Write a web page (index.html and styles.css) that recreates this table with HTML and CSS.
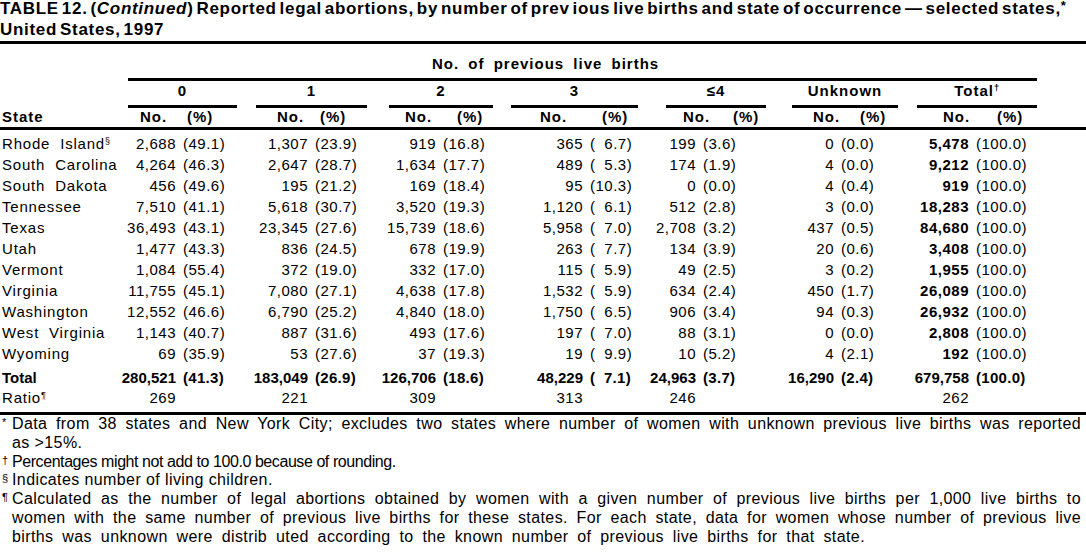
FILE: index.html
```html
<!DOCTYPE html>
<html>
<head>
<meta charset="utf-8">
<link rel="stylesheet" href="styles.css">
</head>
<body>
<h1 class="title"><span class="t1">TABLE 12. (<i>Continued</i>) Reported legal abortions, by number of prev ious live births and state of occurrence — selected states,<sup>*</sup></span><span class="t2">United States, 1997</span></h1>
<table class="data">
<colgroup>
<col class="c-state"><col class="c-n0"><col class="c-p0"><col class="c-n1"><col class="c-p1"><col class="c-n2"><col class="c-p2"><col class="c-n3"><col class="c-p3"><col class="c-n4"><col class="c-p4"><col class="c-n5"><col class="c-p5"><col class="c-n6"><col class="c-p6"><col class="c-rest">
</colgroup>
<thead>
<tr class="h-top"><th></th><th colspan="14"><div class="toprule">No. of previous live births</div></th><th></th></tr>
<tr class="h-grp">
<th></th>
<th colspan="2"><div class="grule g0">0</div></th>
<th colspan="2"><div class="grule g1">1</div></th>
<th colspan="2"><div class="grule g2">2</div></th>
<th colspan="2"><div class="grule g3">3</div></th>
<th colspan="2"><div class="grule g4">≤4</div></th>
<th colspan="2"><div class="grule g5">Unknown</div></th>
<th colspan="2"><div class="grule g6">Total<sup>†</sup></div></th>
<th></th>
</tr>
<tr class="h-sub">
<th class="st">State</th>
<th class="hn n0">No.</th><th class="hp p0">(%)</th>
<th class="hn n1">No.</th><th class="hp p1">(%)</th>
<th class="hn n2">No.</th><th class="hp p2">(%)</th>
<th class="hn n3">No.</th><th class="hp p3">(%)</th>
<th class="hn n4">No.</th><th class="hp p4">(%)</th>
<th class="hn n5">No.</th><th class="hp p5">(%)</th>
<th class="hn n6">No.</th><th class="hp p6">(%)</th>
<th></th>
</tr>
</thead>
<tbody>
<tr class="first"><td class="st">Rhode Island<sup>§</sup></td><td class="n">2,688</td><td class="p">(49.1)</td><td class="n">1,307</td><td class="p">(23.9)</td><td class="n">919</td><td class="p">(16.8)</td><td class="n">365</td><td class="p">(&#8199;6.7)</td><td class="n">199</td><td class="p">(3.6)</td><td class="n">0</td><td class="p">(0.0)</td><td class="n b">5,478</td><td class="p">(100.0)</td><td></td></tr>
<tr><td class="st">South Carolina</td><td class="n">4,264</td><td class="p">(46.3)</td><td class="n">2,647</td><td class="p">(28.7)</td><td class="n">1,634</td><td class="p">(17.7)</td><td class="n">489</td><td class="p">(&#8199;5.3)</td><td class="n">174</td><td class="p">(1.9)</td><td class="n">4</td><td class="p">(0.0)</td><td class="n b">9,212</td><td class="p">(100.0)</td><td></td></tr>
<tr><td class="st">South Dakota</td><td class="n">456</td><td class="p">(49.6)</td><td class="n">195</td><td class="p">(21.2)</td><td class="n">169</td><td class="p">(18.4)</td><td class="n">95</td><td class="p">(10.3)</td><td class="n">0</td><td class="p">(0.0)</td><td class="n">4</td><td class="p">(0.4)</td><td class="n b">919</td><td class="p">(100.0)</td><td></td></tr>
<tr><td class="st">Tennessee</td><td class="n">7,510</td><td class="p">(41.1)</td><td class="n">5,618</td><td class="p">(30.7)</td><td class="n">3,520</td><td class="p">(19.3)</td><td class="n">1,120</td><td class="p">(&#8199;6.1)</td><td class="n">512</td><td class="p">(2.8)</td><td class="n">3</td><td class="p">(0.0)</td><td class="n b">18,283</td><td class="p">(100.0)</td><td></td></tr>
<tr><td class="st">Texas</td><td class="n">36,493</td><td class="p">(43.1)</td><td class="n">23,345</td><td class="p">(27.6)</td><td class="n">15,739</td><td class="p">(18.6)</td><td class="n">5,958</td><td class="p">(&#8199;7.0)</td><td class="n">2,708</td><td class="p">(3.2)</td><td class="n">437</td><td class="p">(0.5)</td><td class="n b">84,680</td><td class="p">(100.0)</td><td></td></tr>
<tr><td class="st">Utah</td><td class="n">1,477</td><td class="p">(43.3)</td><td class="n">836</td><td class="p">(24.5)</td><td class="n">678</td><td class="p">(19.9)</td><td class="n">263</td><td class="p">(&#8199;7.7)</td><td class="n">134</td><td class="p">(3.9)</td><td class="n">20</td><td class="p">(0.6)</td><td class="n b">3,408</td><td class="p">(100.0)</td><td></td></tr>
<tr><td class="st">Vermont</td><td class="n">1,084</td><td class="p">(55.4)</td><td class="n">372</td><td class="p">(19.0)</td><td class="n">332</td><td class="p">(17.0)</td><td class="n">115</td><td class="p">(&#8199;5.9)</td><td class="n">49</td><td class="p">(2.5)</td><td class="n">3</td><td class="p">(0.2)</td><td class="n b">1,955</td><td class="p">(100.0)</td><td></td></tr>
<tr><td class="st">Virginia</td><td class="n">11,755</td><td class="p">(45.1)</td><td class="n">7,080</td><td class="p">(27.1)</td><td class="n">4,638</td><td class="p">(17.8)</td><td class="n">1,532</td><td class="p">(&#8199;5.9)</td><td class="n">634</td><td class="p">(2.4)</td><td class="n">450</td><td class="p">(1.7)</td><td class="n b">26,089</td><td class="p">(100.0)</td><td></td></tr>
<tr><td class="st">Washington</td><td class="n">12,552</td><td class="p">(46.6)</td><td class="n">6,790</td><td class="p">(25.2)</td><td class="n">4,840</td><td class="p">(18.0)</td><td class="n">1,750</td><td class="p">(&#8199;6.5)</td><td class="n">906</td><td class="p">(3.4)</td><td class="n">94</td><td class="p">(0.3)</td><td class="n b">26,932</td><td class="p">(100.0)</td><td></td></tr>
<tr><td class="st">West Virginia</td><td class="n">1,143</td><td class="p">(40.7)</td><td class="n">887</td><td class="p">(31.6)</td><td class="n">493</td><td class="p">(17.6)</td><td class="n">197</td><td class="p">(&#8199;7.0)</td><td class="n">88</td><td class="p">(3.1)</td><td class="n">0</td><td class="p">(0.0)</td><td class="n b">2,808</td><td class="p">(100.0)</td><td></td></tr>
<tr><td class="st">Wyoming</td><td class="n">69</td><td class="p">(35.9)</td><td class="n">53</td><td class="p">(27.6)</td><td class="n">37</td><td class="p">(19.3)</td><td class="n">19</td><td class="p">(&#8199;9.9)</td><td class="n">10</td><td class="p">(5.2)</td><td class="n">4</td><td class="p">(2.1)</td><td class="n b">192</td><td class="p">(100.0)</td><td></td></tr>
<tr class="total"><td class="st">Total</td><td class="n">280,521</td><td class="p">(41.3)</td><td class="n">183,049</td><td class="p">(26.9)</td><td class="n">126,706</td><td class="p">(18.6)</td><td class="n">48,229</td><td class="p">(&#8199;7.1)</td><td class="n">24,963</td><td class="p">(3.7)</td><td class="n">16,290</td><td class="p">(2.4)</td><td class="n">679,758</td><td class="p">(100.0)</td><td></td></tr>
<tr class="ratio"><td class="st">Ratio<sup>¶</sup></td><td class="n">269</td><td class="p"></td><td class="n">221</td><td class="p"></td><td class="n">309</td><td class="p"></td><td class="n">313</td><td class="p"></td><td class="n">246</td><td class="p"></td><td class="n"></td><td class="p"></td><td class="n">262</td><td class="p"></td><td></td></tr>
</tbody>
</table>
<div class="notes">
<p class="note"><span class="jl"><span class="mk">*</span>Data from 38 states and New York City; excludes two states where number of women with unknown previous live births was reported</span><span class="ll">as &gt;15%.</span></p>
<p class="note"><span class="ll tight"><span class="mk">†</span>Percentages might not add to 100.0 because of rounding.</span></p>
<p class="note"><span class="ll"><span class="mk">§</span>Indicates number of living children.</span></p>
<p class="note"><span class="jl"><span class="mk">¶</span>Calculated as the number of legal abortions obtained by women with a given number of previous live births per 1,000 live births to</span><span class="jl">women with the same number of previous live births for these states. For each state, data for women whose number of previous live</span><span class="ll wide">births was unknown were distrib uted according to the known number of previous live births for that state.</span></p>
</div>
</body>
</html>
```

FILE: styles.css
```css
* { box-sizing: border-box; }
html, body { margin: 0; padding: 0; background: #fff; }
body {
  width: 1086px;
  color: #000;
  font-family: "Liberation Sans", Arial, sans-serif;
}

.title {
  margin: -2px 0 0;
  padding-bottom: 1px;
  border-bottom: 3px solid #000;
  font-size: 17px;
  font-weight: bold;
  line-height: 21px;
  letter-spacing: 0.7px;
  word-spacing: -2.5px;
}
.title .t1, .title .t2 { display: block; white-space: nowrap; }
.title sup { font-size: 13px; vertical-align: 4px; line-height: 0; }

.data {
  border-collapse: separate;
  border-spacing: 0;
  table-layout: fixed;
  width: 1086px;
  font-size: 15px;
  letter-spacing: 0.5px;
}
.data th, .data td { padding: 0; white-space: pre; }
.data th { font-weight: bold; letter-spacing: 1px; word-spacing: 4px; }

.c-state { width: 120px; }
.c-n0 { width: 56px; }  .c-p0 { width: 61px; }
.c-n1 { width: 71px; }  .c-p1 { width: 59px; }
.c-n2 { width: 69px; }  .c-p2 { width: 57px; }
.c-n3 { width: 90px; }  .c-p3 { width: 55px; }
.c-n4 { width: 58px; }  .c-p4 { width: 70px; }
.c-n5 { width: 68px; }  .c-p5 { width: 64px; }
.c-n6 { width: 71px; }  .c-p6 { width: 68px; }
.c-rest { width: 49px; }

.h-top th { padding: 0; vertical-align: bottom; }
.toprule {
  margin-left: 8px;
  padding: 12px 0 6px 304px;
  line-height: 16px;
  text-align: left;
  border-bottom: 3px solid #000;
}

.h-grp th { padding: 0; vertical-align: top; }
.grule {
  line-height: 16px;
  padding: 2px 0 6px;
  border-bottom: 3px solid #000;
  text-align: center;
}
.grule sup { font-size: 9px; vertical-align: 5px; line-height: 0; }
.g0 { margin-left: 8px; }
.g1 { margin-left: 19px; }
.g2 { margin-left: 22px; }
.g3 { margin-left: 18px; }
.g4 { margin-left: 28px; }
.g5 { margin-left: 26px; }
.g6 { margin-left: 19px; }

.h-sub th {
  line-height: 16px;
  padding: 1px 0 2px;
  border-bottom: 3px solid #000;
  vertical-align: top;
  text-align: left;
}
.h-sub .st { padding-left: 2px; }
.h-sub .n0 { padding-left: 20px; }
.h-sub .n1 { padding-left: 40px; }
.h-sub .n2 { padding-left: 38px; }
.h-sub .n3 { padding-left: 47px; }
.h-sub .n4 { padding-left: 45px; }
.h-sub .n5 { padding-left: 47px; }
.h-sub .n6 { padding-left: 45px; }
.h-sub .p0 { padding-left: 11px; }
.h-sub .p1 { padding-left: 12px; }
.h-sub .p2 { padding-left: 21px; }
.h-sub .p3 { padding-left: 19px; }
.h-sub .p4 { padding-left: 37px; }
.h-sub .p5 { padding-left: 26px; }
.h-sub .p6 { padding-left: 28px; }

.data td { line-height: 21px; vertical-align: top; }
.data td.st { padding-left: 2px; letter-spacing: 0.8px; word-spacing: 5px; }
.data td.n { text-align: right; }
.data td.p { text-align: left; padding-left: 7px; }
.data td.b { font-weight: bold; }
.data td sup { font-size: 9px; vertical-align: 5px; line-height: 0; letter-spacing: 0; }

.data tr.first td { padding-top: 3px; }
.data tr.total td { font-weight: bold; line-height: 20px; padding-top: 4px; letter-spacing: 0; }
.data tr.total td.p { letter-spacing: 0.3px; }
.data tr.ratio td { line-height: 20px; padding-bottom: 4px; border-bottom: 3px solid #000; }

.notes { padding-top: 0; }
.note {
  margin: 0;
  padding: 0 5px 0 12px;
  font-size: 16px;
  line-height: 18.8px;
  letter-spacing: 0.4px;
}
.note .jl { display: block; text-align: justify; text-align-last: justify; }
.note .ll { display: block; }
.note .tight { letter-spacing: -0.43px; }
.note .wide { word-spacing: 4px; }
.note .jl:first-child, .note .ll:first-child { margin-left: -10px; }
.mk {
  display: inline-block;
  width: 10px;
  font-size: 11px;
  letter-spacing: 0;
  vertical-align: 3px;
  line-height: 0;
}
```
